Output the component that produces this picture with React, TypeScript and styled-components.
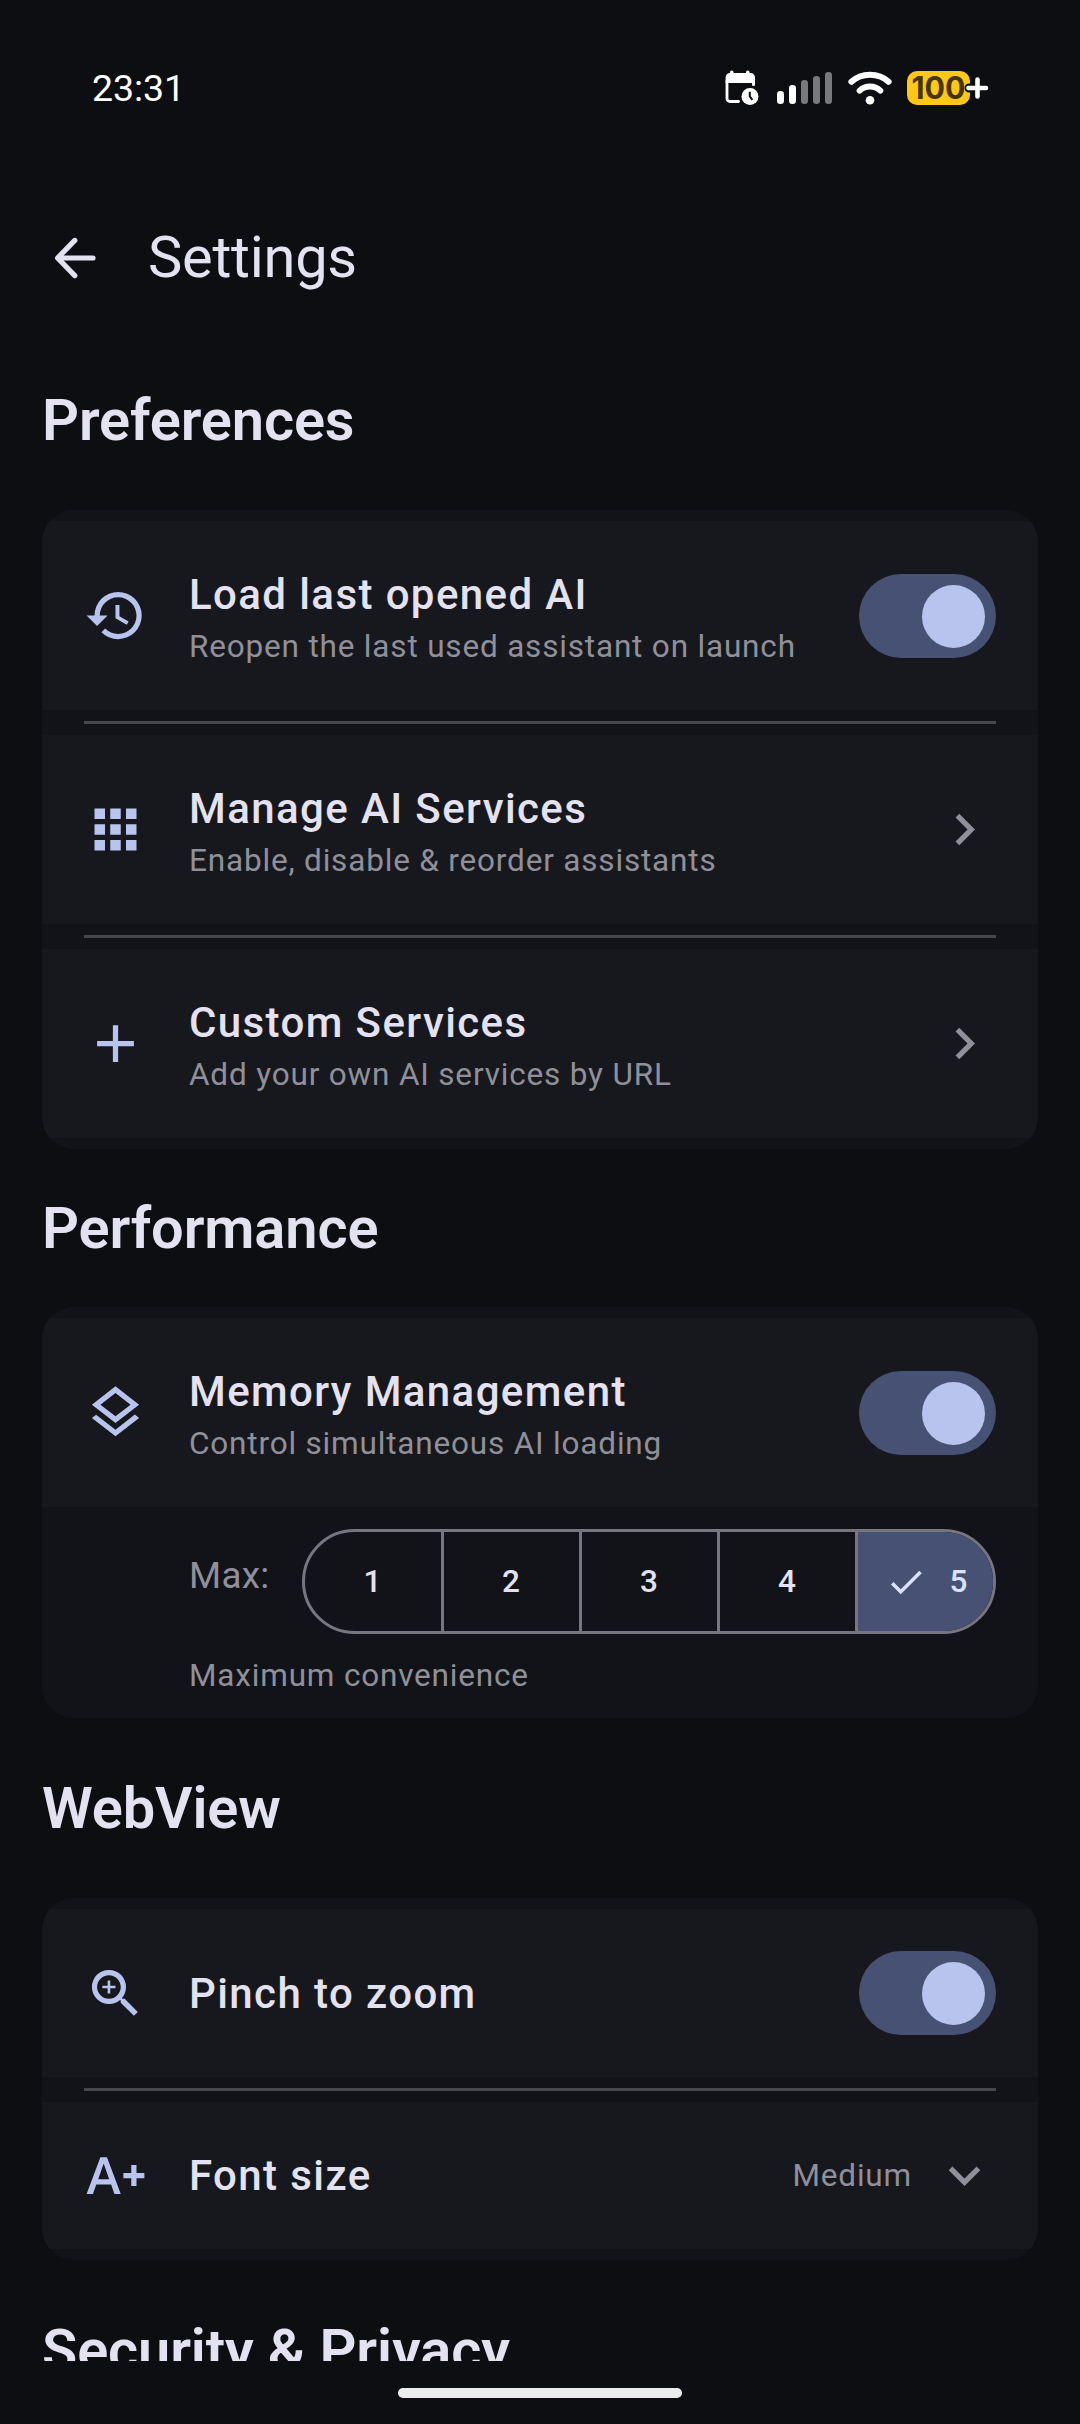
import React from 'react';
import styled, { createGlobalStyle } from 'styled-components';
import {
  MdAdd,
  MdApps,
  MdCheck,
  MdChevronRight,
  MdExpandMore,
  MdHistory,
  MdOutlineLayers,
  MdTextIncrease,
  MdZoomIn,
} from 'react-icons/md';

const color = {
  background: '#0d0e12',
  card: '#121318',
  row: '#17181d',
  text: '#e4e2f0',
  muted: '#90909a',
  outline: '#777680',
  divider: '#46464c',
  primary: '#b8c4ee',
  container: '#475173',
  onContainer: '#dbe1ff',
};

const GlobalStyle = createGlobalStyle`
  *, *::before, *::after { box-sizing: border-box; }
  html, body { margin: 0; padding: 0; background: ${color.background}; }
  body { font-family: Roboto, 'Noto Sans', sans-serif; }
  svg { display: block; flex: none; }
`;

const Screen = styled.div`
  display: flex;
  flex-direction: column;
  width: 1080px;
  height: 2424px;
  overflow: hidden;
  background: ${color.background};
  color: ${color.text};
`;

const StatusBar = styled.header`
  display: flex;
  align-items: center;
  justify-content: space-between;
  height: 174px;
  flex: none;
  padding: 2px 91px 0 92px;
  color: #ffffff;
`;

const Clock = styled.time`
  padding-bottom: 1px;
  font-size: 37.5px;
  line-height: 44px;
  letter-spacing: -0.1px;
`;

const StatusIcons = styled.div`
  display: flex;
  align-items: center;
`;

const StatusIcon = styled.svg<{ $gap?: number }>`
  margin-left: ${(p) => p.$gap ?? 0}px;
`;

const TopBar = styled.div`
  display: flex;
  align-items: center;
  height: 168px;
  flex: none;
  padding: 0 0 2px 11px;
`;

const BackButton = styled.button`
  display: flex;
  align-items: center;
  justify-content: center;
  width: 126px;
  height: 126px;
  margin-right: 11px;
  padding: 1px 0 0;
  border: 0;
  background: none;
  color: ${color.text};
`;

const PageTitle = styled.h1`
  margin: 0;
  font-size: 57.75px;
  font-weight: 400;
  line-height: 74px;
  letter-spacing: -0.25px;
`;

const Content = styled.main`
  height: 2019px;
  flex: none;
  overflow: hidden;
  padding: 0 42px;
`;

const SectionTitle = styled.h2<{ $before: number; $after: number }>`
  margin: 0;
  padding: ${(p) => p.$before}px 0 ${(p) => p.$after}px;
  font-size: 57.75px;
  font-weight: 600;
  line-height: 74px;
  letter-spacing: -0.12px;
  white-space: nowrap;
`;

const Card = styled.section<{ $bottom?: number }>`
  overflow: hidden;
  padding: 11px 0 ${(p) => p.$bottom ?? 11}px;
  border-radius: 32px;
  background: ${color.card};
`;

const Row = styled.div<{ $height: number }>`
  display: flex;
  align-items: center;
  height: ${(p) => p.$height}px;
  padding: 0 42px;
  background: ${color.row};
`;

const Divider = styled.hr`
  height: 3px;
  margin: 11px 42px;
  border: 0;
  background: ${color.divider};
`;

const LeadingIcon = styled.span`
  display: flex;
  margin-right: 42px;
  color: ${color.primary};
  font-size: 63px;
`;

const TrailingIcon = styled.span`
  display: flex;
  color: ${color.muted};
  font-size: 63px;
`;

const Labels = styled.div`
  display: flex;
  flex: 1;
  flex-direction: column;
`;

const Label = styled.span`
  font-size: 42px;
  font-weight: 500;
  line-height: 63px;
  letter-spacing: 1.4px;
`;

const Caption = styled.span`
  color: ${color.muted};
  font-size: 31.5px;
  line-height: 42px;
  letter-spacing: 0.82px;
`;

const Value = styled(Caption)`
  margin-right: 21px;
`;

const Track = styled.span`
  display: flex;
  justify-content: flex-end;
  width: 137px;
  height: 84px;
  padding: 11px;
  border-radius: 42px;
  background: ${color.container};
`;

const Thumb = styled.span`
  width: 63px;
  height: 63px;
  border-radius: 50%;
  background: ${color.primary};
`;

const LimitPanel = styled.div`
  display: flex;
  flex-direction: column;
  gap: 21px;
  padding: 22px 42px 0 147px;
`;

const LimitRow = styled.div`
  display: flex;
  align-items: center;
  justify-content: space-between;
`;

const LimitLabel = styled.span`
  padding-bottom: 13px;
  color: ${color.muted};
  font-size: 36.75px;
  line-height: 53px;
  letter-spacing: 0.3px;
`;

const Segments = styled.div`
  display: grid;
  grid-template-columns: 139px 138px 138px 138px 135px;
  width: 694px;
  height: 105px;
  overflow: hidden;
  border: 3px solid ${color.outline};
  border-radius: 53px;
`;

const Segment = styled.button<{ $selected: boolean }>`
  display: flex;
  align-items: center;
  justify-content: center;
  gap: 22px;
  padding: 0 0 0 ${(p) => (p.$selected ? 3 : 0)}px;
  border: 0;
  border-right: ${(p) => (p.$selected ? '0' : `3px solid ${color.outline}`)};
  background: ${(p) => (p.$selected ? color.container : 'transparent')};
  color: ${(p) => (p.$selected ? color.onContainer : color.text)};
  font-family: inherit;
  font-size: 31.5px;
  font-weight: 500;
  line-height: 42px;
  letter-spacing: 1.3px;

  svg {
    font-size: 42px;
  }
`;

const NavigationBar = styled.footer`
  display: flex;
  justify-content: center;
  padding-top: 27px;
`;

const Handle = styled.span`
  width: 284px;
  height: 10px;
  border-radius: 5px;
  background: #ececec;
`;

function ScheduleIcon() {
  return (
    <StatusIcon width="34" height="36" viewBox="0 0 34 36" fill="none">
      <path d="M2 11V28.5a3 3 0 0 0 3 3H13.5" stroke="#fff" strokeWidth="2.8" strokeLinecap="round" />
      <path
        d="M5 3V2.2a1.8 1.8 0 0 1 3.6 0V3H21V2.2a1.8 1.8 0 0 1 3.6 0V3h1a4.5 4.5 0 0 1 4.4 4.5V14.5a1.5 1.5 0 0 1-3 0V13H.6V7.5A4.5 4.5 0 0 1 5 3Z"
        fill="#fff"
      />
      <circle cx="25" cy="26.5" r="8.5" fill="#fff" />
      <path d="M24.8 21.8v4.6l2.6 3.4" stroke={color.background} strokeWidth="2" />
    </StatusIcon>
  );
}

function SignalIcon() {
  const tops = [19, 13, 8, 4, 0];
  return (
    <StatusIcon $gap={18} width="56" height="32" viewBox="0 0 56 32">
      {tops.map((top, i) => (
        <rect
          key={top}
          x={i * 12}
          y={top}
          width="7"
          height={32 - top}
          rx="3.3"
          fill={i < 2 ? '#ffffff' : '#78797c'}
        />
      ))}
    </StatusIcon>
  );
}

function WifiIcon() {
  return (
    <StatusIcon $gap={15} width="44" height="34" viewBox="0 0 44 34" fill="none">
      <path d="M3.4 10.8C13.5 1.4 30.5 1.4 40.6 10.8" stroke="#fff" strokeWidth="6" strokeLinecap="round" />
      <path d="M11.7 19.6C17.5 14.2 26.5 14.2 32.3 19.6" stroke="#fff" strokeWidth="6" strokeLinecap="round" />
      <circle cx="22" cy="29.2" r="4.3" fill="#fff" />
    </StatusIcon>
  );
}

function BatteryIcon() {
  return (
    <StatusIcon $gap={15} width="82" height="46" viewBox="0 -6 82 46">
      <rect width="63" height="34" rx="10" fill="#fec818" />
      <text
        x="4.5"
        y="28"
        fill="#463500"
        fontFamily="Inter, sans-serif"
        fontSize="31"
        fontWeight="700"
        textLength="54"
        lengthAdjust="spacingAndGlyphs"
      >
        100
      </text>
      <path d="M62 17H79M70.5 8.5V25.5" stroke={color.background} strokeWidth="9" strokeLinecap="round" />
      <path d="M61.5 17H79M70.5 8.5V25.5" stroke="#fff" strokeWidth="4.6" strokeLinecap="round" />
    </StatusIcon>
  );
}

function BackIcon() {
  return (
    <svg width="48" height="48" viewBox="0 0 48 48" fill="none">
      <path
        d="M43 24H8.5M24.8 6.4L7.6 24L24.8 41.6"
        stroke="currentColor"
        strokeWidth="5.2"
        strokeLinecap="round"
        strokeLinejoin="round"
      />
    </svg>
  );
}

function Switch() {
  return (
    <Track role="switch" aria-checked="true">
      <Thumb />
    </Track>
  );
}

interface SettingProps {
  icon: React.ReactNode;
  label: string;
  caption?: string;
  height?: number;
  children: React.ReactNode;
}

function Setting({ icon, label, caption, height = 189, children }: SettingProps) {
  return (
    <Row $height={height}>
      <LeadingIcon>{icon}</LeadingIcon>
      <Labels>
        <Label>{label}</Label>
        {caption && <Caption>{caption}</Caption>}
      </Labels>
      {children}
    </Row>
  );
}

function LimitPicker({ value }: { value: number }) {
  return (
    <Segments>
      {[1, 2, 3, 4, 5].map((n) => (
        <Segment key={n} $selected={n === value}>
          {n === value && <MdCheck />}
          {n}
        </Segment>
      ))}
    </Segments>
  );
}

export default function App() {
  return (
    <>
      <GlobalStyle />
      <Screen>
        <StatusBar>
          <Clock>23:31</Clock>
          <StatusIcons>
            <ScheduleIcon />
            <SignalIcon />
            <WifiIcon />
            <BatteryIcon />
          </StatusIcons>
        </StatusBar>

        <TopBar>
          <BackButton aria-label="Back">
            <BackIcon />
          </BackButton>
          <PageTitle>Settings</PageTitle>
        </TopBar>

        <Content>
          <SectionTitle $before={41} $after={53}>Preferences</SectionTitle>
          <Card>
            <Setting
              icon={<MdHistory />}
              label="Load last opened AI"
              caption="Reopen the last used assistant on launch"
            >
              <Switch />
            </Setting>
            <Divider />
            <Setting icon={<MdApps />} label="Manage AI Services" caption="Enable, disable & reorder assistants">
              <TrailingIcon><MdChevronRight /></TrailingIcon>
            </Setting>
            <Divider />
            <Setting icon={<MdAdd />} label="Custom Services" caption="Add your own AI services by URL">
              <TrailingIcon><MdChevronRight /></TrailingIcon>
            </Setting>
          </Card>

          <SectionTitle $before={42} $after={42}>Performance</SectionTitle>
          <Card $bottom={21}>
            <Setting
              icon={<MdOutlineLayers />}
              label="Memory Management"
              caption="Control simultaneous AI loading"
            >
              <Switch />
            </Setting>
            <LimitPanel>
              <LimitRow>
                <LimitLabel>Max:</LimitLabel>
                <LimitPicker value={5} />
              </LimitRow>
              <Caption>Maximum convenience</Caption>
            </LimitPanel>
          </Card>

          <SectionTitle $before={53} $after={53}>WebView</SectionTitle>
          <Card>
            <Setting icon={<MdZoomIn />} label="Pinch to zoom" height={168}>
              <Switch />
            </Setting>
            <Divider />
            <Setting icon={<MdTextIncrease />} label="Font size" height={147}>
              <Value>Medium</Value>
              <TrailingIcon><MdExpandMore /></TrailingIcon>
            </Setting>
          </Card>

          <SectionTitle $before={53} $after={53}>Security &amp; Privacy</SectionTitle>
        </Content>

        <NavigationBar>
          <Handle />
        </NavigationBar>
      </Screen>
    </>
  );
}
